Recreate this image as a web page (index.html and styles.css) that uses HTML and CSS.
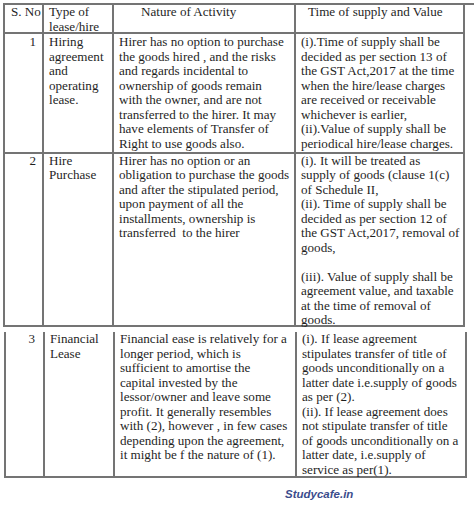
FILE: index.html
```html
<!DOCTYPE html>
<html>
<head>
<meta charset="utf-8">
<link rel="stylesheet" href="styles.css">
</head>
<body>
<div class="sheet">
  <div class="grid grid-top">
    <div class="cell head num-head">S. No</div>
    <div class="cell head">Type of<br>lease/hire</div>
    <div class="cell head nature-head">Nature of Activity</div>
    <div class="cell head time-head">Time of supply and Value</div>

    <div class="cell num">1</div>
    <div class="cell">Hiring<br>agreement<br>and<br>operating<br>lease.</div>
    <div class="cell">Hirer has no option to purchase<br>the goods hired , and the risks<br>and regards incidental to<br>ownership of goods remain<br>with the owner, and are not<br>transferred to the hirer. It may<br>have elements of Transfer of<br>Right to use goods also.</div>
    <div class="cell">(i).Time of supply shall be<br>decided as per section 13 of<br>the GST Act,2017 at the time<br>when the hire/lease charges<br>are received or receivable<br>whichever is earlier,<br>(ii).Value of supply shall be<br>periodical hire/lease charges.</div>

    <div class="cell num row2">2</div>
    <div class="cell row2">Hire<br>Purchase</div>
    <div class="cell row2">Hirer has no option or an<br>obligation to purchase the goods<br>and after the stipulated period,<br>upon payment of all the<br>installments, ownership is<br>transferred&nbsp; to the hirer</div>
    <div class="cell row2">(i). It will be treated as<br>supply of goods (clause 1(c)<br>of Schedule II,<br>(ii). Time of supply shall be<br>decided as per section 12 of<br>the GST Act,2017, removal of<br>goods,<br>&nbsp;<br>(iii). Value of supply shall be<br>agreement value, and taxable<br>at the time of removal of<br>goods.</div>
  </div>

  <div class="grid grid-bottom">
    <div class="cell num num-3">3</div>
    <div class="cell">Financial<br>Lease</div>
    <div class="cell">Financial ease is relatively for a<br>longer period, which is<br>sufficient to amortise the<br>capital invested by the<br>lessor/owner and leave some<br>profit. It generally resembles<br>with (2), however , in few cases<br>depending upon the agreement,<br>it might be f the nature of (1).</div>
    <div class="cell">(i). If lease agreement<br>stipulates transfer of title of<br>goods unconditionally on a<br>latter date i.e.supply of goods<br>as per (2).<br>(ii). If lease agreement does<br>not stipulate transfer of title<br>of goods unconditionally on a<br>latter date, i.e.supply of<br>service as per(1).</div>
  </div>

  <div class="brand">Studycafe.in</div>
</div>
</body>
</html>
```

FILE: styles.css
```css
html, body {
  margin: 0;
  padding: 0;
  background: #ffffff;
}

.sheet {
  width: 474px;
  height: 512px;
  overflow: hidden;
  font-family: "Liberation Serif", "DejaVu Serif", serif;
  font-size: 13.1px;
  line-height: 14.55px;
  color: #1f1f1f;
}

.grid {
  display: grid;
  border-left: 2px solid #747474;
}

.grid-top {
  margin: 3px 0 0 3px;
  border-top: 2px solid #747474;
  grid-template-columns: 39px 70px 182px 169px;
  grid-template-rows: 29px 120px 173px;
}

.grid-bottom {
  margin: 5px 0 0 4px;
  grid-template-columns: 39px 70px 182px 170px;
  grid-template-rows: 146px;
}

.cell {
  box-sizing: border-box;
  border-right: 2px solid #747474;
  border-bottom: 2px solid #747474;
  padding: 1px 0 0 5px;
  white-space: nowrap;
  overflow: visible;
}

.cell.head {
  padding-top: 0;
}

.cell.row2 {
  padding-top: 0;
  line-height: 14.45px;
}

.grid-bottom .cell {
  padding-top: 0;
}

.num {
  text-align: right;
  padding: 1px 6px 0 0;
}

.num-3 {
  padding-right: 8px;
}

.cell.num-head {
  padding-left: 6px;
}

.cell.nature-head {
  padding-left: 27px;
}

.cell.time-head {
  padding-left: 12px;
}

.brand {
  margin: 8px 0 0 285px;
  font-family: "Liberation Sans", "Open Sans", sans-serif;
  font-size: 11.5px;
  line-height: 16px;
  font-weight: bold;
  font-style: italic;
  color: #3b4c8c;
}
```
